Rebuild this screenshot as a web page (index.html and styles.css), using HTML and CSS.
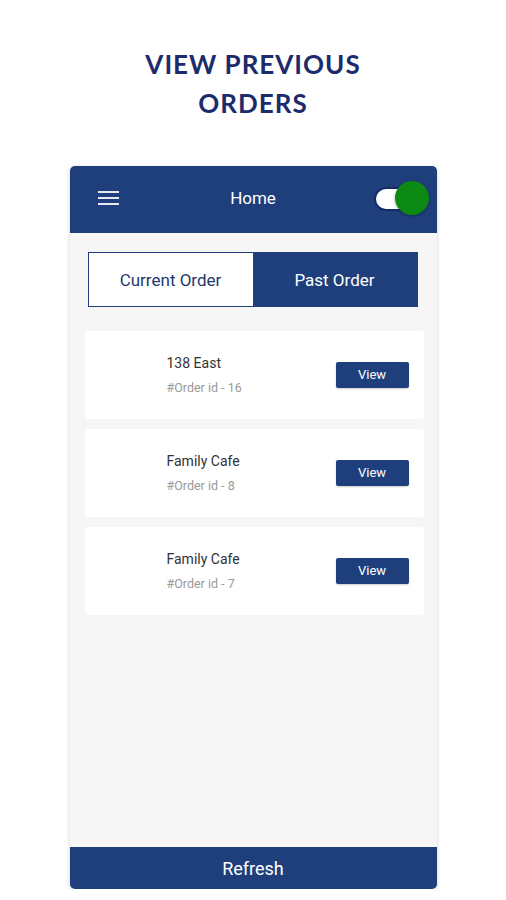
FILE: index.html
```html
<!DOCTYPE html>
<html lang="en">
<head>
  <meta charset="UTF-8">
  <meta name="viewport" content="width=device-width, initial-scale=1.0">
  <title>View Previous Orders</title>
  <link rel="stylesheet" href="styles.css">
</head>
<body>
  <h1 class="promo-title">VIEW PREVIOUS<br>ORDERS</h1>

  <div class="phone">
    <header class="app-bar">
      <div class="burger"><span></span><span></span><span></span></div>
      <div class="app-title">Home</div>
      <div class="switch"><span class="knob"></span></div>
    </header>

    <main class="content">
      <div class="tabs">
        <div class="tab">Current Order</div>
        <div class="tab active">Past Order</div>
      </div>

      <div class="order-list">
        <div class="order-card">
          <div class="order-info">
            <div class="order-name">138 East</div>
            <div class="order-id">#Order id - 16</div>
          </div>
          <a class="view-btn" href="javascript:;">View</a>
        </div>
        <div class="order-card">
          <div class="order-info">
            <div class="order-name">Family Cafe</div>
            <div class="order-id">#Order id - 8</div>
          </div>
          <a class="view-btn" href="javascript:;">View</a>
        </div>
        <div class="order-card">
          <div class="order-info">
            <div class="order-name">Family Cafe</div>
            <div class="order-id">#Order id - 7</div>
          </div>
          <a class="view-btn" href="javascript:;">View</a>
        </div>
      </div>
    </main>

    <footer class="refresh">Refresh</footer>
  </div>
</body>
</html>
```

FILE: styles.css
```css
:root {
  --primary: #1e3f7c;
  --title: #1b2b6c;
  --bg: #f6f6f6;
  --surface: #fff;
  --text: #333;
  --sub: #9a9a9a;
}
*, *::before, *::after {
  box-sizing: border-box;
}
body, h1 {
  margin: 0;
  padding: 0;
}
body {
  font-family: Roboto, "Liberation Sans", Arial, sans-serif;
  background: #fff;
  color: var(--text);
}
.promo-title {
  margin-top: 45px;
  text-align: center;
  font-family: Lato, "Open Sans", sans-serif;
  font-weight: 700;
  font-size: 26px;
  line-height: 39px;
  letter-spacing: 1px;
  color: var(--title);
}
.phone {
  width: 367px;
  height: 723px;
  margin: 43px auto 0;
  display: flex;
  flex-direction: column;
  background: var(--bg);
  border-radius: 5px;
  overflow: hidden;
  box-shadow: 0 1px 4px rgba(0,0,0,0.18);
}
.app-bar {
  height: 67px;
  background: var(--primary);
  display: grid;
  grid-template-columns: 1fr auto 1fr;
  align-items: center;
  padding: 0 7px 4px 28px;
  color: #fff;
}
.burger {
  width: 21px;
  display: flex;
  flex-direction: column;
  gap: 4px;
}
.burger span {
  display: block;
  height: 2px;
  background: #e6e9f0;
}
.app-title {
  font-size: 17px;
  margin-left: -21px;
}
.switch {
  justify-self: end;
  width: 56px;
  height: 36px;
  position: relative;
}
.switch::before {
  content: "";
  position: absolute;
  left: 0;
  top: 7px;
  width: 38px;
  height: 24px;
  border-radius: 12px;
  background: #fff;
  border: 2px solid #132c66;
}
.knob {
  position: absolute;
  right: 1px;
  top: 1px;
  width: 34px;
  height: 34px;
  border-radius: 50%;
  background: #0c8a14;
  box-shadow: 0 1px 3px rgba(0,0,0,0.35);
}
.content {
  flex: 1;
  padding: 19px 13px 0 15px;
}
.tabs {
  display: flex;
  margin: 0 6px 0 3px;
  height: 55px;
  border: 1px solid var(--primary);
}
.tab {
  flex: 1;
  display: flex;
  align-items: center;
  justify-content: center;
  font-size: 17px;
  background: var(--surface);
  color: #23386e;
}
.tab.active {
  background: var(--primary);
  color: #fff;
}
.order-list {
  margin-top: 24px;
  display: flex;
  flex-direction: column;
  gap: 10px;
}
.order-card {
  height: 88px;
  background: var(--surface);
  border-radius: 3px;
  display: flex;
  align-items: center;
  justify-content: space-between;
  padding: 0 15px 0 82px;
}
.order-name {
  font-size: 14px;
  color: #333;
}
.order-id {
  margin-top: 9px;
  font-size: 12.5px;
  color: var(--sub);
}
.view-btn {
  width: 73px;
  height: 26px;
  line-height: 26px;
  text-align: center;
  background: var(--primary);
  color: #fff;
  font-size: 13px;
  text-decoration: none;
  border-radius: 2px;
  box-shadow: 0 1px 2px rgba(0,0,0,0.2);
}
.refresh {
  height: 42px;
  background: var(--primary);
  color: #fff;
  font-size: 18px;
  display: flex;
  align-items: center;
  justify-content: center;
}
```
